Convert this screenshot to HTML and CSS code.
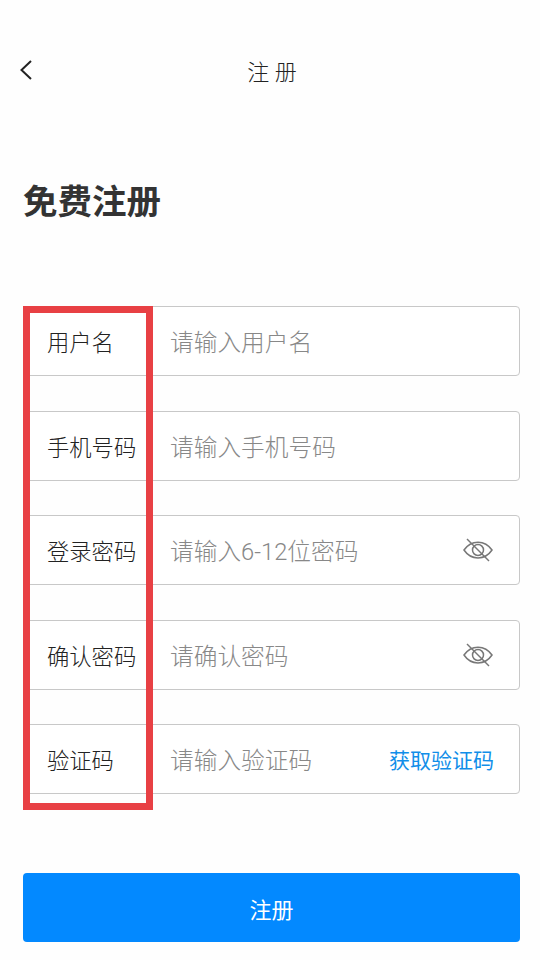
FILE: index.html
```html
<!DOCTYPE html>
<html lang="zh-CN">
<head>
<meta charset="utf-8">
<title>注册</title>
<link rel="stylesheet" href="styles.css">
</head>
<body>
<header class="topbar">
  <svg class="back" viewBox="0 0 14 22" width="14" height="22"><path d="M12 2 2.5 11 12 20"/></svg>
  <span class="topbar-title">注 册</span>
</header>
<main class="page">
  <h1 class="heading">免费注册</h1>
  <div class="form">
    <div class="row"><span class="label">用户名</span><span class="hint">请输入用户名</span></div>
    <div class="row"><span class="label">手机号码</span><span class="hint">请输入手机号码</span></div>
    <div class="row"><span class="label">登录密码</span><span class="hint">请输入6-12位密码</span>
      <svg class="eye" viewBox="0 0 32 26" width="32" height="26"><path d="M2 13C9 2.500 23 2.500 30 13C23 23.500 9 23.500 2 13Z"/><circle cx="16" cy="13" r="5.500"/><path d="M5 2 27 24"/></svg></div>
    <div class="row"><span class="label">确认密码</span><span class="hint">请确认密码</span>
      <svg class="eye" viewBox="0 0 32 26" width="32" height="26"><path d="M2 13C9 2.500 23 2.500 30 13C23 23.500 9 23.500 2 13Z"/><circle cx="16" cy="13" r="5.500"/><path d="M5 2 27 24"/></svg></div>
    <div class="row"><span class="label">验证码</span><span class="hint">请输入验证码</span><span class="code">获取验证码</span></div>
    <div class="marker"></div>
  </div>
  <button class="submit">注册</button>
</main>
</body>
</html>
```
FILE: styles.css
```css
* { box-sizing: border-box; }
body {
  margin: 0;
  min-height: 960px;
  background: #fefefe;
  font-family: Roboto, "Noto Sans CJK SC", sans-serif;
  color: #222;
}
.topbar {
  display: grid;
  grid-template-columns: 40px 1fr 36px;
  align-items: center;
  height: 140px;
}
.back { margin-left: 19px; fill: none; stroke: #222; stroke-width: 2; }
.topbar-title { text-align: center; font-size: 22px; font-weight: 300; }
.page { padding: 0 20px 0 23px; }
.heading {
  margin: 0;
  height: 166px;
  padding-top: 37px;
  font-size: 34.5px;
  line-height: 50px;
  font-weight: 700;
  color: #333;
}
.form { position: relative; display: grid; gap: 34.5px; }
.row {
  display: grid;
  grid-template-columns: 123px 1fr auto;
  align-items: center;
  height: 70px;
  padding: 0 25px 0 23px;
  border: 1px solid #c8c8c8;
  border-radius: 4px;
  background: #fff;
}
.label { font-size: 22.3px; font-weight: 300; }
.hint { font-size: 23.7px; font-weight: 300; color: #888; }
.eye { fill: none; stroke: #777; stroke-width: 1.5; }
.code { font-size: 21px; color: #118ee9; }
.marker {
  position: absolute;
  left: 0;
  top: 0;
  width: 130px;
  height: 504px;
  border: 7px solid #e84044;
}
.submit {
  display: block;
  width: 100%;
  height: 69px;
  margin-top: 79px;
  border: 0;
  border-radius: 4px;
  background: #0389ff;
  color: #fff;
  font: 400 22px Roboto, "Noto Sans CJK SC", sans-serif;
}
```
